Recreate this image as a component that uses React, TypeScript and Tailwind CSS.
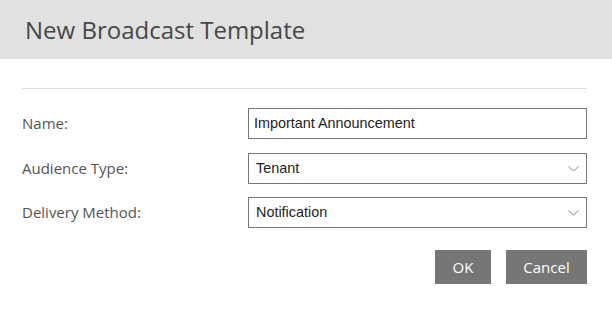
import React from "react";

const Chevron = () => (
  <svg width="11" height="6" viewBox="0 0 11 6" className="shrink-0">
    <path d="M0.5 0.5 L5.5 5 L10.5 0.5" fill="none" stroke="#8a8a8a" strokeWidth="1" />
  </svg>
);

export default function App() {
  const label = "text-[15px] text-[#555555] w-[226px] shrink-0";
  const sans = { fontFamily: '"Open Sans", sans-serif' } as React.CSSProperties;
  const arial = { fontFamily: '"Liberation Sans", Arial, sans-serif' } as React.CSSProperties;
  return (
    <div className="w-[612px] h-[314px] bg-white" style={sans}>
      <div className="h-[59px] bg-[#e1e1e1] flex items-center px-[25px]">
        <h1 className="text-[24px] text-[#474747] font-normal leading-none">New Broadcast Template</h1>
      </div>
      <div className="pl-[22px] pr-[25px]">
        <div className="mt-[29px] h-px bg-[#dddddd]" />
        <div className="mt-[19px] flex items-center h-[31px]">
          <div className={label}>Name:</div>
          <div className="flex-1 h-[31px] border border-[#767676] flex items-center px-[5px] text-[14.4px] text-[#222]" style={arial}>
            Important Announcement
          </div>
        </div>
        <div className="mt-[14px] flex items-center h-[31px]">
          <div className={label}>Audience Type:</div>
          <div className="flex-1 h-[31px] border border-[#767676] flex items-center justify-between pl-[7px] pr-[7px] text-[14.4px] text-[#222]" style={arial}>
            <span>Tenant</span>
            <Chevron />
          </div>
        </div>
        <div className="mt-[13px] flex items-center h-[31px]">
          <div className={label}>Delivery Method:</div>
          <div className="flex-1 h-[31px] border border-[#767676] flex items-center justify-between pl-[7px] pr-[7px] text-[14.4px] text-[#222]" style={arial}>
            <span>Notification</span>
            <Chevron />
          </div>
        </div>
        <div className="mt-[22px] flex justify-end gap-[15px]">
          <button className="w-[56px] h-[34px] bg-[#767676] text-white text-[15px]">OK</button>
          <button className="w-[81px] h-[34px] bg-[#767676] text-white text-[15px]">Cancel</button>
        </div>
      </div>
    </div>
  );
}
